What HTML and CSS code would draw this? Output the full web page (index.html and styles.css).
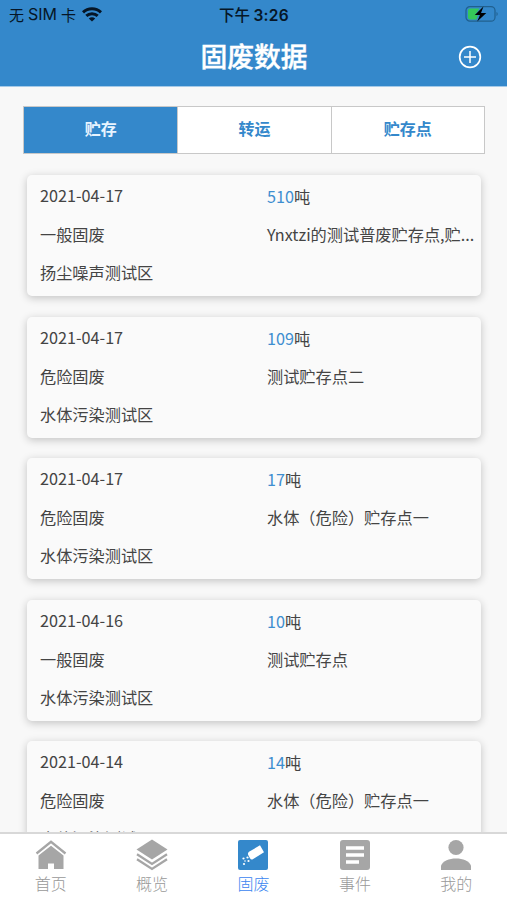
FILE: index.html
```html
<!DOCTYPE html>
<html lang="zh-CN">
<head>
    <meta charset="UTF-8">
    <meta name="viewport" content="width=device-width, initial-scale=1.0">
    <title>固废数据</title>
    <link rel="stylesheet" href="styles.css">
</head>

<body>
    <div class="page">
        <header class="header">
            <div class="status">
                <div class="carrier">
                    <span>无</span><span class="sim">SIM</span><span>卡</span>
                    <svg class="wifi" width="20" height="15" viewBox="0 0 20 15">
                        <g fill="none" stroke="#061626" stroke-width="3">
                            <path d="M1 5.4C6 .6 14 .6 19 5.4" />
                            <path d="M4.3 8.900C7.500 5.900 12.500 5.900 15.700 8.900" />
                        </g>
                        <path d="M6.800 11.400C8.600 9.800 11.400 9.800 13.200 11.400L10 14.600Z" fill="#061626" />
                    </svg>
                </div>
                <div class="time">下午 <b>3:26</b></div>
                <svg class="battery" width="34" height="18" viewBox="0 0 34 18">
                    <rect x="1" y="1.6" width="29" height="14.6" rx="4" fill="none" stroke="#20608f" stroke-width="1.2" />
                    <path d="M31.5 7v4c1.6-.5 1.6-3.5 0-4z" fill="#20608f" />
                    <path d="M5 3.5h9.5L10 10h3l-1.500 4.500H5a2 2 0 0 1-2-2v-7a2 2 0 0 1 2-2z" fill="#35c75a" />
                    <path d="M18.500 1.500L9.800 10H15l-2.800 6.500L21.300 8H16z" fill="#000" />
                </svg>
            </div>
            <div class="bar">
                <h1>固废数据</h1>
                <svg class="add" width="24" height="24" viewBox="0 0 24 24" fill="none" stroke="#fff">
                    <circle cx="12" cy="12" r="10.3" stroke-width="1.7" />
                    <path d="M12 6v12M6 12h12" stroke-width="1.5" />
                </svg>
            </div>
        </header>

        <main class="content">
            <div class="tabs">
                <div class="tab active">贮存</div>
                <div class="tab">转运</div>
                <div class="tab">贮存点</div>
            </div>

            <div class="list">
                <div class="card">
                    <p>2021-04-17</p>
                    <p class="num"><span>510</span>吨</p>
                    <p>一般固废</p>
                    <p>Ynxtzi的测试普废贮存点,贮...</p>
                    <p>扬尘噪声测试区</p>
                </div>
                <div class="card">
                    <p>2021-04-17</p>
                    <p class="num"><span>109</span>吨</p>
                    <p>危险固废</p>
                    <p>测试贮存点二</p>
                    <p>水体污染测试区</p>
                </div>
                <div class="card">
                    <p>2021-04-17</p>
                    <p class="num"><span>17</span>吨</p>
                    <p>危险固废</p>
                    <p>水体（危险）贮存点一</p>
                    <p>水体污染测试区</p>
                </div>
                <div class="card">
                    <p>2021-04-16</p>
                    <p class="num"><span>10</span>吨</p>
                    <p>一般固废</p>
                    <p>测试贮存点</p>
                    <p>水体污染测试区</p>
                </div>
                <div class="card">
                    <p>2021-04-14</p>
                    <p class="num"><span>14</span>吨</p>
                    <p>危险固废</p>
                    <p>水体（危险）贮存点一</p>
                    <p>水体污染测试区</p>
                </div>
            </div>
        </main>

        <nav class="nav">
            <div class="item">
                <svg width="32" height="32" viewBox="0 0 32 32">
                    <path d="M1.5 14.500L16 2.800l14.500 11.700" fill="none" stroke="#a6a6a6" stroke-width="2.3" />
                    <path d="M3.500 16.500L16 6.800l12.500 9.700V30H19v-5.500h-6V30H3.500z" fill="#a6a6a6" />
                </svg>
                <span>首页</span>
            </div>
            <div class="item">
                <svg width="32" height="32" viewBox="0 0 32 32">
                    <path d="M16 .5L31.500 10.500 16 20.500.5 10.500z" fill="#a6a6a6" />
                    <path d="M1 15.200l15 9.800 15-9.800M1 20.200L16 30l15-9.800" fill="none" stroke="#a6a6a6" stroke-width="2.3" />
                </svg>
                <span>概览</span>
            </div>
            <div class="item on">
                <svg width="32" height="32" viewBox="0 0 32 32">
                    <rect x="1" y="1" width="30" height="30" rx="2" fill="#3488cb" />
                    <path d="M12 12.700L23 6.300l4 7L15.800 20.300q-1.800.7-2.800-1l-1.800-3.300q-.8-2 .8-3.300z" fill="#fff" />
                    <g fill="#fff">
                        <circle cx="10.5" cy="18.500" r="1.100" />
                        <circle cx="6.500" cy="19.500" r="1.100" />
                        <circle cx="11.500" cy="22" r="1.100" />
                        <circle cx="8" cy="22" r=".8" />
                        <circle cx="7" cy="25" r="1.100" />
                    </g>
                </svg>
                <span>固废</span>
            </div>
            <div class="item">
                <svg width="32" height="32" viewBox="0 0 32 32">
                    <rect x="1" y="1" width="30" height="30" rx="3" fill="#a6a6a6" />
                    <path d="M7 9h18M7 16h18M7 23h13" stroke="#fff" stroke-width="3.6" />
                </svg>
                <span>事件</span>
            </div>
            <div class="item">
                <svg width="32" height="32" viewBox="0 0 32 32" fill="#a6a6a6">
                    <circle cx="16" cy="8.5" r="7.600" />
                    <path d="M1 31v-4.500C3 22 9 19.500 16 19.500S29 22 31 26.500V31z" />
                </svg>
                <span>我的</span>
            </div>
        </nav>
    </div>
</body>

</html>
```
FILE: styles.css
```css
* {
    box-sizing: border-box;
}

body {
    margin: 0;
    font-family: "Noto Sans CJK SC", sans-serif;
    color: #444;
    background: #f8f8f8;
}

p,
h1 {
    margin: 0;
}

.page {
    height: 900px;
    display: flex;
    flex-direction: column;
    overflow: hidden;
}

.header {
    height: 87px;
    flex: none;
    background: #3488cb;
    border-bottom: 1px solid #a5cae8;
}

.status {
    display: grid;
    grid-template-columns: 1fr auto 1fr;
    align-items: center;
    height: 28px;
    padding: 0 8px 0 9px;
    font-size: 15px;
    color: #061626;
}

.carrier {
    display: flex;
    align-items: center;
}

.sim {
    font-family: Inter, sans-serif;
    font-size: 16px;
    margin: 0 4px;
}

.wifi {
    margin-left: 6px;
}

.time {
    font-weight: 500;
    font-size: 15.5px;
    white-space: pre;
}

.time b {
    font-family: Inter, sans-serif;
    font-weight: 600;
    letter-spacing: 0.3px;
}

.battery {
    justify-self: end;
}

.bar {
    display: grid;
    grid-template-columns: 1fr auto 1fr;
    align-items: center;
    height: 58px;
    padding-right: 25px;
    padding-left: 26px;
}

.bar h1 {
    grid-column: 2;
    padding-bottom: 3px;
    font-size: 26.8px;
    line-height: 40px;
    font-weight: 500;
    -webkit-text-stroke: 0.4px #fff;
    color: #fff;
}

.add {
    justify-self: end;
}

.content {
    flex: 1;
    min-height: 0;
    overflow: hidden;
    padding: 19px 22px 0 23px;
}

.tabs {
    display: grid;
    grid-template-columns: repeat(3, 1fr);
    height: 48px;
    border: 1px solid #c8c8c8;
    background: #fff;
}

.tab {
    padding-bottom: 3px;
    line-height: 43px;
    text-align: center;
    font-size: 16px;
    font-weight: bold;
    color: #3488cb;
    border-left: 1px solid #c8c8c8;
}

.tab:first-child {
    border-left: 0;
}

.active {
    background: #3488cb;
    color: #e8f4ff;
}

.list {
    display: flex;
    flex-direction: column;
    gap: 20.6px;
    padding: 21px 4px 0;
}

.card {
    flex: none;
    display: grid;
    grid-template-columns: 227px 1fr;
    grid-template-rows: 39px 38px 37px;
    height: 121px;
    padding: 1px 5px 0 13px;
    border-radius: 5px;
    background: #fafafa;
    box-shadow: 0 2px 8px rgba(0, 0, 0, 0.22);
    font-size: 16.2px;
    line-height: 38px;
}

.card p {
    white-space: nowrap;
}

.card .num {
    padding-top: 1px;
}

.num span {
    color: #3e8ed0;
}

.nav {
    position: relative;
    flex: none;
    display: grid;
    grid-template-columns: repeat(5, 1fr);
    height: 68px;
    padding-top: 5px;
    border-top: 2px solid #d8d8d8;
    background: #fff;
}

.item {
    display: flex;
    flex-direction: column;
    align-items: center;
    font-size: 16px;
    line-height: 24px;
    font-weight: 300;
    color: #999;
}

.on {
    color: #3b86f0;
}
```
